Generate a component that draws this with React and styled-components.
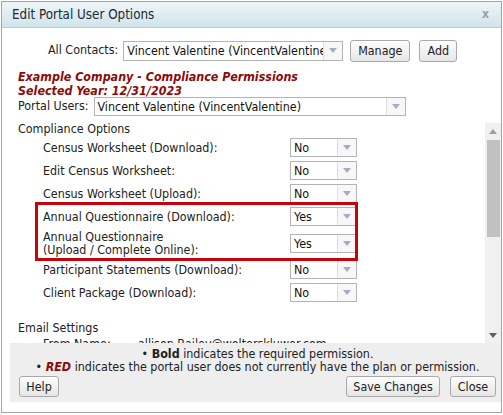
import React from 'react';
import styled, { createGlobalStyle } from 'styled-components';

const GlobalStyle = createGlobalStyle`
    html, body {
        margin: 0;
        padding: 0;
        background: #fff;
    }
    body {
        font-family: "DejaVu Sans Condensed", Tahoma, "DejaVu Sans", sans-serif;
        font-size: 12.4px;
        color: #222;
    }
`;

const complianceRows = [
    { label: 'Census Worksheet (Download):', value: 'No' },
    { label: 'Edit Census Worksheet:', value: 'No' },
    { label: 'Census Worksheet (Upload):', value: 'No' },
];

const highlightedRows = [
    { label: 'Annual Questionnaire (Download):', value: 'Yes' },
    { label: ['Annual Questionnaire', '(Upload / Complete Online):'], value: 'Yes', tall: true },
];

const moreRows = [
    { label: 'Participant Statements (Download):', value: 'No' },
    { label: 'Client Package (Download):', value: 'No' },
];

function Select({ value, width, height }) {
    return (
        <SelectBox $width={width} $height={height}>
            <SelectText>{value}</SelectText>
            <SelectArrow>
                <svg width="8" height="5" viewBox="0 0 8 5">
                    <path d="M0 0 H8 L4 5 Z" fill="#a3aec6" />
                </svg>
            </SelectArrow>
        </SelectBox>
    );
}

function OptionRow({ label, value, tall }) {
    return (
        <Row $tall={tall}>
            <RowLabel>
                {Array.isArray(label) ? label.map((l) => <div key={l}>{l}</div>) : label}
            </RowLabel>
            <Select value={value} width={67} height={19} />
        </Row>
    );
}

function App() {
    return (
        <>
            <GlobalStyle />
            <Dialog>
                <TitleBar>
                    <Title>Edit Portal User Options</Title>
                    <CloseX>x</CloseX>
                </TitleBar>

                <Header>
                    <ContactsRow>
                        <span>All Contacts:</span>
                        <Select value="Vincent Valentine (VincentValentine)" width={220} height={20} />
                        <Button $width={60}>Manage</Button>
                        <Button $width={38}>Add</Button>
                    </ContactsRow>
                    <CompanyHeading>
                        <div>Example Company - Compliance Permissions</div>
                        <div>Selected Year: 12/31/2023</div>
                    </CompanyHeading>
                    <PortalRow>
                        <span>Portal Users:</span>
                        <Select value="Vincent Valentine (VincentValentine)" width={312} height={19} />
                    </PortalRow>
                </Header>

                <ScrollArea>
                    <ScrollContent>
                        <SectionTitle>Compliance Options</SectionTitle>
                        <Rows>
                            {complianceRows.map((r) => (
                                <OptionRow key={r.label} {...r} />
                            ))}
                            <Highlight>
                                {highlightedRows.map((r) => (
                                    <OptionRow key={String(r.label)} {...r} />
                                ))}
                            </Highlight>
                            {moreRows.map((r) => (
                                <OptionRow key={r.label} {...r} />
                            ))}
                        </Rows>
                        <SectionTitle $spaced>Email Settings</SectionTitle>
                        <EmailRow>
                            <EmailLabel>From Name:</EmailLabel>
                            <span>allison.Bailey@wolterskluwer.com</span>
                        </EmailRow>
                    </ScrollContent>
                    <ScrollBar>
                        <ScrollButton>
                            <svg width="8" height="5" viewBox="0 0 8 5">
                                <path d="M0 5 H8 L4 0 Z" fill="#a0a0a0" />
                            </svg>
                        </ScrollButton>
                        <Thumb />
                        <Track />
                        <ScrollButton>
                            <svg width="8" height="5" viewBox="0 0 8 5">
                                <path d="M0 0 H8 L4 5 Z" fill="#606060" />
                            </svg>
                        </ScrollButton>
                    </ScrollBar>
                </ScrollArea>

                <Footer>
                    <Legend>
                        <div>• <b>Bold</b> indicates the required permission.</div>
                        <div>• <RedWord>RED</RedWord> indicates the portal user does not currently have the plan or permission.</div>
                    </Legend>
                    <FooterButtons>
                        <Button $width={40} $height={21}>Help</Button>
                        <Spacer />
                        <Button $width={94} $height={21}>Save Changes</Button>
                        <Button $width={46} $height={21}>Close</Button>
                    </FooterButtons>
                </Footer>
            </Dialog>
        </>
    );
}

export default App;


const Dialog = styled.div`
    margin: 1px;
    width: 501px;
    height: 412px;
    box-sizing: border-box;
    border: 1px solid #a3a3a3;
    display: flex;
    flex-direction: column;
    background: #fff;
`;

const TitleBar = styled.div`
    height: 26px;
    box-sizing: border-box;
    display: flex;
    align-items: center;
    justify-content: space-between;
    padding: 0 12px 1px 10px;
    background: linear-gradient(#eef5f8, #d0e4eb);
    border-bottom: 1px solid #b7ccd5;
    flex: none;
`;

const Title = styled.div`
    font-size: 13.3px;
    color: #1f2a30;
`;

const CloseX = styled.div`
    font-weight: bold;
    font-size: 12px;
    color: #9aa0a3;
    line-height: 1;
`;

const Header = styled.div`
    height: 95px;
    flex: none;
    padding: 0 0 0 16px;
    box-sizing: border-box;
`;

const ContactsRow = styled.div`
    display: flex;
    align-items: center;
    height: 23px;
    margin-top: 11px;
    padding-left: 30px;

    & > span {
        margin-top: -2px;
    }
    & > *:nth-child(2) {
        margin: 0 7px 0 5px;
    }
    & > *:nth-child(3) {
        margin-right: 9px;
    }
`;

const SelectBox = styled.div`
    display: flex;
    width: ${(p) => p.$width}px;
    height: ${(p) => p.$height}px;
    box-sizing: border-box;
    border: 1px solid #b4b4b4;
    background: #fff;
    flex: none;
`;

const SelectText = styled.div`
    flex: 1;
    min-width: 0;
    overflow: hidden;
    white-space: nowrap;
    padding-left: 3px;
    line-height: 17px;
    color: #111;
`;

const SelectArrow = styled.div`
    width: 18px;
    flex: none;
    border-left: 1px solid #dedede;
    background: #f7f7f7;
    display: flex;
    align-items: center;
    justify-content: center;
`;

const Button = styled.div`
    width: ${(p) => p.$width}px;
    height: ${(p) => p.$height || 22}px;
    box-sizing: border-box;
    border: 1px solid #a9a9a9;
    border-radius: 3px;
    background: linear-gradient(#fdfdfd, #e6e6e6);
    box-shadow: inset 0 1px 0 #fff;
    display: flex;
    align-items: center;
    justify-content: center;
    color: #222;
    flex: none;
`;

const CompanyHeading = styled.div`
    margin-top: 8px;
    color: #8c0a0a;
    font-weight: bold;
    font-style: italic;
    line-height: 13.5px;
`;

const PortalRow = styled.div`
    display: flex;
    align-items: center;
    gap: 5px;
    height: 19px;

    & > span {
        margin-top: -2px;
    }
`;

const ScrollArea = styled.div`
    height: 220px;
    flex: none;
    display: flex;
`;

const ScrollContent = styled.div`
    flex: 1;
    overflow: hidden;
    padding-left: 16px;
`;

const SectionTitle = styled.div`
    line-height: 13px;
    margin-top: ${(p) => (p.$spaced ? 17 : -1)}px;
`;

const Rows = styled.div`
    padding-left: 25px;
    margin-top: 1px;
`;

const Row = styled.div`
    display: flex;
    align-items: center;
    height: ${(p) => (p.$tall ? 30 : 23)}px;
    line-height: 13px;
`;

const RowLabel = styled.div`
    width: 247px;
    flex: none;
`;

const Highlight = styled.div`
    position: relative;

    &::after {
        content: '';
        position: absolute;
        top: -3px;
        bottom: -3px;
        left: -8px;
        width: 323px;
        box-sizing: border-box;
        border: 3px solid #c8030b;
        pointer-events: none;
    }
`;

const EmailRow = styled.div`
    display: flex;
    padding-left: 25px;
    margin-top: 3px;
    line-height: 14px;
`;

const EmailLabel = styled.span`
    width: 95px;
`;

const ScrollBar = styled.div`
    width: 16px;
    flex: none;
    background: #f0f0f0;
    display: flex;
    flex-direction: column;
    align-items: center;
`;

const ScrollButton = styled.div`
    height: 16px;
    width: 16px;
    display: flex;
    align-items: center;
    justify-content: center;
    flex: none;
`;

const Thumb = styled.div`
    width: 13px;
    height: 97px;
    margin-top: 1px;
    background: #c1c1c1;
    flex: none;
`;

const Track = styled.div`
    flex: 1;
`;

const Footer = styled.div`
    height: 59px;
    flex: none;
    margin: 0 0 0 8px;
    box-sizing: border-box;
    background: #eeeeee;
    padding: 4px 5px 0 9px;
`;

const Legend = styled.div`
    text-align: center;
    line-height: 13px;
`;

const RedWord = styled.b`
    color: #8c0a0a;
    font-style: italic;
`;

const FooterButtons = styled.div`
    display: flex;
    align-items: center;
    gap: 10px;
    margin-top: 3px;
`;

const Spacer = styled.div`
    flex: 1;
`;
